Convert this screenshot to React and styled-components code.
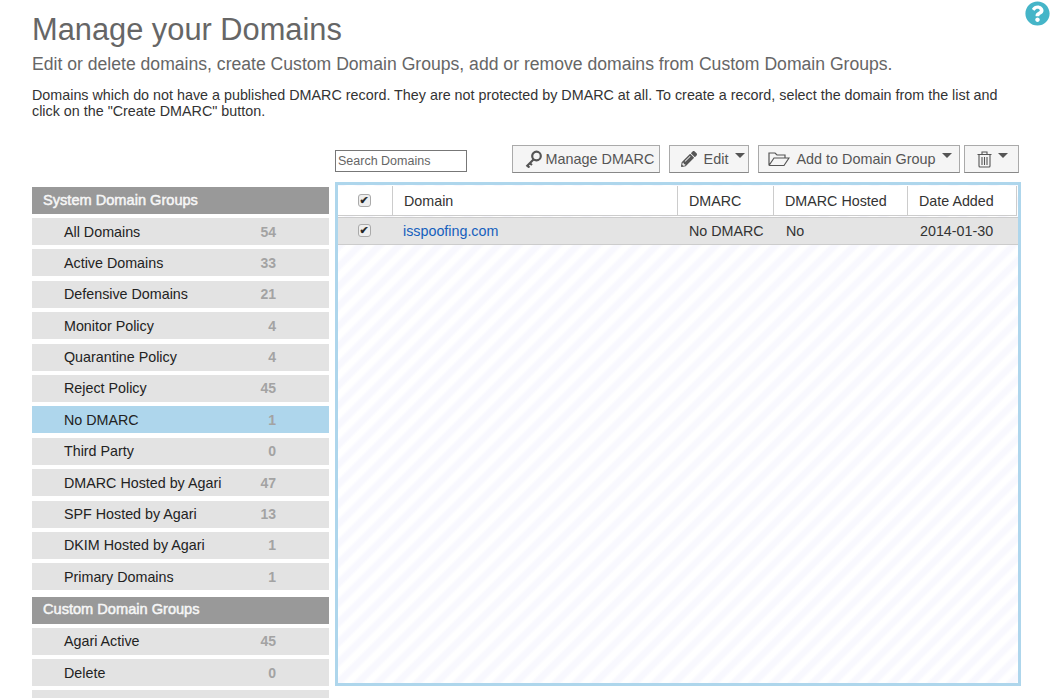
import React from 'react'
import styled, { createGlobalStyle } from 'styled-components'
import { FaQuestionCircle, FaPencilAlt } from 'react-icons/fa'

const systemGroups = [
    ['All Domains', 54],
    ['Active Domains', 33],
    ['Defensive Domains', 21],
    ['Monitor Policy', 4],
    ['Quarantine Policy', 4],
    ['Reject Policy', 45],
    ['No DMARC', 1, true],
    ['Third Party', 0],
    ['DMARC Hosted by Agari', 47],
    ['SPF Hosted by Agari', 13],
    ['DKIM Hosted by Agari', 1],
    ['Primary Domains', 1],
]

const customGroups = [
    ['Agari Active', 45],
    ['Delete', 0],
    ['', ''],
]

const KeyIcon = () => (
    <svg width="19" height="18" viewBox="0 0 19 18" fill="none" stroke="#555" strokeWidth="2.2">
        <circle cx="12.5" cy="6" r="4.3" />
        <path d="M9.5 9.5 L2.5 16.5 M3 15.5 L5.5 17.5 M5.5 13 L8 15" />
    </svg>
)

const FolderIcon = () => (
    <svg width="22" height="16" viewBox="0 0 22 16" fill="none" stroke="#555" strokeWidth="1.2">
        <path d="M1 14.5 V2 h6 l2 2 h8 v3 M1 14.5 h15 l5 -7.5 H6 l-5 7.5" />
    </svg>
)

const TrashIcon = () => (
    <svg width="15" height="17" viewBox="0 0 15 17" fill="none" stroke="#555" strokeWidth="1.1">
        <path d="M0.5 3.5 h14 M5 3.5 V1 h5 v2.5 M2 3.5 v11.5 a1 1 0 0 0 1 1 h9 a1 1 0 0 0 1 -1 V3.5 M5 6 v8 M7.5 6 v8 M10 6 v8" />
    </svg>
)

const App = () => {
    return (
        <Page>
            <GlobalStyle />
            <TitleRow>
                <Title>Manage your Domains</Title>
                <HelpIcon><FaQuestionCircle /></HelpIcon>
            </TitleRow>
            <Subtitle>Edit or delete domains, create Custom Domain Groups, add or remove domains from Custom Domain Groups.</Subtitle>
            <Intro>Domains which do not have a published DMARC record. They are not protected by DMARC at all. To create a record, select the domain from the list and click on the "Create DMARC" button.</Intro>
            <Toolbar>
                <SearchInput placeholder="Search Domains" />
                <Buttons>
                    <ToolButton $width={148} $pad={6}><KeyIcon />Manage DMARC</ToolButton>
                    <ToolButton $width={80} $gap={7} $pad={8}><FaPencilAlt size={16} />Edit<Caret /></ToolButton>
                    <ToolButton $width={202} $gap={6} $pad={2}><FolderIcon />Add to Domain Group<Caret /></ToolButton>
                    <ToolButton $width={55} $gap={6} $pad={2}><TrashIcon /><Caret /></ToolButton>
                </Buttons>
            </Toolbar>
            <Columns>
                <Sidebar>
                    <GroupHeader>System Domain Groups</GroupHeader>
                    {systemGroups.map(([name, count, active]) => (
                        <GroupRow key={name} $active={active}>
                            <span>{name}</span>
                            <Count>{count}</Count>
                        </GroupRow>
                    ))}
                    <GroupHeader $second>Custom Domain Groups</GroupHeader>
                    {customGroups.map(([name, count]) => (
                        <GroupRow key={name}>
                            <span>{name}</span>
                            <Count>{count}</Count>
                        </GroupRow>
                    ))}
                </Sidebar>
                <Panel>
                    <HeadRow>
                        <HeadCell $width={55} $center><Check type="checkbox" defaultChecked /></HeadCell>
                        <HeadCell $width={285}>Domain</HeadCell>
                        <HeadCell $width={96}>DMARC</HeadCell>
                        <HeadCell $width={134}>DMARC Hosted</HeadCell>
                        <HeadCell $width={109}>Date Added</HeadCell>
                    </HeadRow>
                    <DataRow>
                        <DataCell $width={54} $center><Check type="checkbox" defaultChecked /></DataCell>
                        <DataCell $width={286}><DomainLink href="#">isspoofing.com</DomainLink></DataCell>
                        <DataCell $width={97}>No DMARC</DataCell>
                        <DataCell $width={134}>No</DataCell>
                        <DataCell $width={109}>2014-01-30</DataCell>
                    </DataRow>
                </Panel>
            </Columns>
        </Page>
    )
}

export default App

const GlobalStyle = createGlobalStyle`
    html, body {
        margin: 0;
        padding: 0;
        background: #fff;
        overflow: hidden;
    }
    * {
        box-sizing: border-box;
    }
`

const Page = styled.div`
    width: 1055px;
    height: 698px;
    overflow: hidden;
    padding: 12px 5px 0 32px;
    font-family: "Liberation Sans", Arial, sans-serif;
    color: #333;
`

const TitleRow = styled.div`
    display: flex;
    justify-content: space-between;
    align-items: flex-start;
    height: 36px;
`

const Title = styled.h1`
    margin: 0;
    font-size: 30.8px;
    line-height: 36px;
    font-weight: normal;
    color: #666;
`

const HelpIcon = styled.span`
    display: flex;
    margin-top: -11px;
    font-size: 25px;
    color: #45b5c8;
`

const Subtitle = styled.h2`
    margin: 6px 0 0;
    font-size: 17.6px;
    line-height: 20px;
    font-weight: normal;
    color: #666;
`

const Intro = styled.p`
    margin: 13px 0 0;
    width: 985px;
    font-size: 14.33px;
    line-height: 16px;
    color: #333;
`

const Toolbar = styled.div`
    display: flex;
    justify-content: space-between;
    align-items: flex-start;
    width: 987px;
    height: 37px;
    margin: 26px 0 0 0;
    padding-left: 303px;
`

const SearchInput = styled.input`
    width: 132px;
    height: 22px;
    margin-top: 5px;
    padding: 0 2px;
    border: 1px solid #777;
    border-radius: 0;
    outline: 0;
    font-family: inherit;
    font-size: 12.5px;
    color: #555;
    &::placeholder {
        color: #666;
        opacity: 1;
    }
`

const Buttons = styled.div`
    display: flex;
    gap: 9px;
    & > button:last-child {
        margin-left: -5px;
    }
`

const ToolButton = styled.button`
    display: flex;
    align-items: center;
    justify-content: center;
    gap: ${({ $gap }) => $gap || 3}px;
    width: ${({ $width }) => $width}px;
    height: 28px;
    padding: 0 0 0 ${({ $pad }) => $pad || 0}px;
    border: 1px solid #aaa;
    border-bottom-color: #888;
    border-radius: 0;
    background: #f5f5f5;
    font-family: inherit;
    font-size: 14.4px;
    color: #555;
    svg {
        flex: none;
        color: #555;
    }
`

const Caret = styled.span`
    width: 0;
    height: 0;
    margin: -7px 0 0 0;
    border-left: 5px solid transparent;
    border-right: 5px solid transparent;
    border-top: 5px solid #555;
`

const Columns = styled.div`
    display: flex;
    gap: 6px;
`

const Sidebar = styled.div`
    display: flex;
    flex-direction: column;
    flex: none;
    width: 297px;
    padding-top: 5px;
`

const GroupHeader = styled.div`
    display: flex;
    align-items: center;
    flex: none;
    height: 27px;
    margin-top: ${({ $second }) => ($second ? '2px' : '0')};
    margin-bottom: 4px;
    padding: 0 0 2px 11px;
    background: #999;
    color: #f6f6f6;
    font-size: 14.6px;
    -webkit-text-stroke: 0.5px #f6f6f6;
`

const GroupRow = styled.div`
    display: flex;
    align-items: center;
    justify-content: space-between;
    flex: none;
    height: 27px;
    margin-bottom: 4.4px;
    padding: 0 53px 0 32px;
    background: ${({ $active }) => ($active ? '#aed6ec' : '#e3e3e3')};
    color: #222;
    font-size: 14.3px;
`

const Count = styled.span`
    color: #a3a3a3;
    font-weight: bold;
    font-size: 14px;
`

const Panel = styled.div`
    flex: none;
    width: 686px;
    height: 504px;
    padding: 1px 0 0;
    border: 3px solid #aed6ec;
    background: repeating-linear-gradient(135deg, #f8f8fe 0, #f8f8fe 4px, #fff 7px, #fff 11px, #f8f8fe 14px);
`

const HeadRow = styled.div`
    display: flex;
    width: 679px;
    height: 30px;
    background: #fff;
    border-bottom: 1px solid #ccc;
`

const HeadCell = styled.div`
    display: flex;
    align-items: center;
    justify-content: ${({ $center }) => ($center ? 'center' : 'flex-start')};
    width: ${({ $width }) => $width}px;
    padding-left: ${({ $center }) => ($center ? '0' : '11px')};
    border-right: 1px solid #ccc;
    font-size: 14.3px;
    color: #333;
`

const DataRow = styled.div`
    display: flex;
    width: 680px;
    height: 28px;
    margin-top: 1px;
    background: #e4e4e4;
    border: 1px solid #ccc;
    border-width: 1px 0;
`

const DataCell = styled.div`
    display: flex;
    align-items: center;
    justify-content: ${({ $center }) => ($center ? 'center' : 'flex-start')};
    width: ${({ $width }) => $width}px;
    padding-left: ${({ $center }) => ($center ? '0' : '11px')};
    font-size: 14.3px;
    color: #333;
`

const DomainLink = styled.a`
    color: #1560bd;
    text-decoration: none;
`

const Check = styled.input`
    appearance: none;
    display: flex;
    align-items: center;
    justify-content: center;
    width: 13px;
    height: 13px;
    margin: 0 2px 1px 0;
    border: 1px solid #aaa;
    border-radius: 3px;
    background: #eee;
    &:checked::after {
        content: '✔';
        font-family: "DejaVu Sans", sans-serif;
        font-size: 11px;
        line-height: 11px;
        color: #222;
        -webkit-text-stroke: 0.3px #222;
    }
`
